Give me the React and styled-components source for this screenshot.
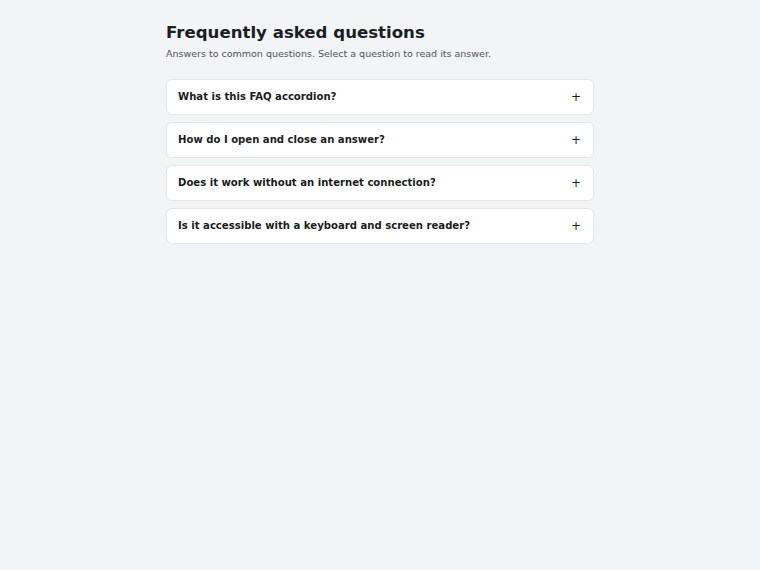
import { useState } from "react";
import styled, { createGlobalStyle } from "styled-components";

const GlobalStyle = createGlobalStyle`
  html, body {
    margin: 0;
    padding: 0;
    background: #f3f4f6;
    font-family: "DejaVu Sans", "Liberation Sans", sans-serif;
    color: #111827;
  }
`;

const Page = styled.main`
  width: 428px;
  margin: 0 auto;
  padding: 23px 0 40px;
`;

const Title = styled.h1`
  margin: 0;
  font-size: 16.6px;
  line-height: 20px;
  font-weight: 700;
  color: #1a1d21;
`;

const Subtitle = styled.p`
  margin: 4px 0 18px;
  font-size: 9.5px;
  line-height: 14px;
  color: #4b5563;
`;

const List = styled.div`
  display: flex;
  flex-direction: column;
  gap: 7px;
`;

const Item = styled.div`
  background: #ffffff;
  border: 1px solid #e3e5e9;
  border-radius: 6px;
`;

const Trigger = styled.button`
  display: flex;
  align-items: center;
  justify-content: space-between;
  width: 100%;
  height: 34px;
  padding: 0 12px 1px 11px;
  border: 0;
  background: transparent;
  font-family: inherit;
  font-size: 10.1px;
  font-weight: 700;
  color: #1a1d21;
  text-align: left;
  cursor: pointer;
`;

const Sign = styled.span`
  font-size: 12px;
  font-weight: 400;
  line-height: 1;
  color: #1a1d21;
`;

const Answer = styled.div`
  padding: 0 11px 12px;
  font-size: 9.5px;
  line-height: 14px;
  color: #4b5563;
`;

const faqs = [
  {
    q: "What is this FAQ accordion?",
    a: "A list of common questions where each answer is hidden until you select its question.",
  },
  {
    q: "How do I open and close an answer?",
    a: "Click or tap a question to reveal its answer, and select it again to collapse it.",
  },
  {
    q: "Does it work without an internet connection?",
    a: "Yes. All questions and answers are part of the page, so nothing needs to be fetched.",
  },
  {
    q: "Is it accessible with a keyboard and screen reader?",
    a: "Each question is a button with aria-expanded, so it can be focused and toggled with Enter or Space.",
  },
];

export default function App() {
  const [open, setOpen] = useState(null);

  return (
    <>
      <GlobalStyle />
      <Page>
        <Title>Frequently asked questions</Title>
        <Subtitle>Answers to common questions. Select a question to read its answer.</Subtitle>
        <List>
          {faqs.map((item, i) => (
            <Item key={item.q}>
              <Trigger
                aria-expanded={open === i}
                onClick={() => setOpen(open === i ? null : i)}
              >
                {item.q}
                <Sign>{open === i ? "−" : "+"}</Sign>
              </Trigger>
              {open === i && <Answer>{item.a}</Answer>}
            </Item>
          ))}
        </List>
      </Page>
    </>
  );
}
